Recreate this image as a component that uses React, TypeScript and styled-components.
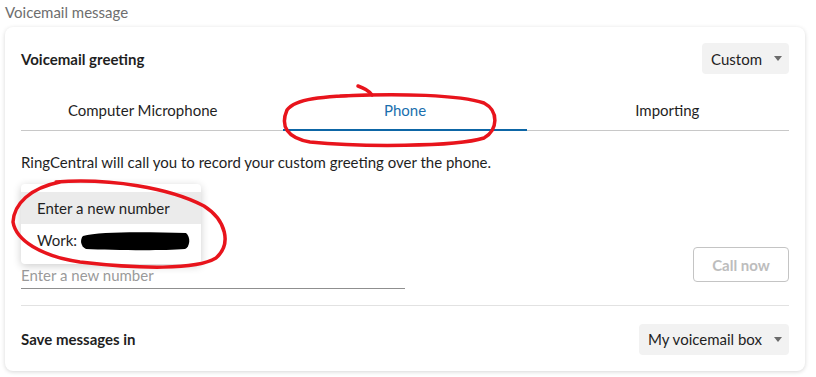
import React from "react";
import styled, { createGlobalStyle } from "styled-components";

const Global = createGlobalStyle`
  html, body { margin: 0; padding: 0; background: #ffffff; }
  body { font-family: Lato, "Open Sans", sans-serif; color: #212121; }
  * { box-sizing: border-box; }
`;

const Page = styled.div`
  position: relative;
  width: 816px;
  height: 377px;
  padding: 2px 11px 0 5px;
  overflow: hidden;
`;

const SectionLabel = styled.div`
  font-size: 15px;
  line-height: 20px;
  color: #6e6e6e;
  height: 25px;
`;

const Card = styled.div`
  background: #fff;
  border-radius: 8px;
  box-shadow: 0 1px 4px rgba(0, 0, 0, 0.16);
  padding: 16px 16px 16px 16px;
  display: flex;
  flex-direction: column;
`;

const HeaderRow = styled.div`
  display: flex;
  align-items: center;
  justify-content: space-between;
  height: 31px;
`;

const Title = styled.div`
  font-size: 15px;
  font-weight: 700;
  color: #1f1f1f;
`;

const Select = styled.div`
  display: flex;
  align-items: center;
  height: 31px;
  padding: 0 7px 0 9px;
  gap: 12px;
  background: #f2f2f2;
  border-radius: 4px;
  font-size: 15px;
  color: #1f1f1f;
`;

const Caret = styled.span`
  width: 0;
  height: 0;
  border-left: 4.5px solid transparent;
  border-right: 4.5px solid transparent;
  border-top: 5px solid #6b6b6b;
`;

const Tabs = styled.div`
  margin-top: 16px;
  display: grid;
  grid-template-columns: repeat(3, 1fr);
  column-gap: 19px;
  border-bottom: 1px solid #c8c8c8;
`;

const Tab = styled.div<{ $active?: boolean }>`
  height: 41px;
  display: flex;
  align-items: center;
  justify-content: center;
  font-size: 15px;
  color: ${(p) => (p.$active ? "#1a6fae" : "#1f1f1f")};
  box-shadow: ${(p) => (p.$active ? "inset 0 -2px 0 #0d66a6" : "none")};
  margin-bottom: -1px;
  padding-bottom: 1px;
`;

const Description = styled.p`
  margin: 21px 0 0;
  font-size: 15px;
  line-height: 20px;
  color: #1f1f1f;
`;

const PhoneRow = styled.div`
  margin-top: 12px;
  display: flex;
  justify-content: space-between;
  align-items: flex-end;
`;

const Field = styled.div`
  position: relative;
  width: 384px;
  height: 105px;
  display: flex;
  align-items: flex-end;
`;

const Input = styled.div`
  width: 100%;
  height: 30px;
  border-bottom: 1px solid #8f8f8f;
  font-size: 15px;
  line-height: 30px;
  color: #9a9a9a;
  padding-top: 1px;
`;

const Menu = styled.div`
  position: absolute;
  top: 0;
  left: 0;
  width: 180px;
  padding: 8px 0;
  background: #fff;
  border-radius: 4px;
  box-shadow: 0 2px 8px rgba(0, 0, 0, 0.2);
  z-index: 2;
`;

const MenuItem = styled.div<{ $highlight?: boolean }>`
  height: 32px;
  display: flex;
  align-items: center;
  padding-left: 16px;
  font-size: 15px;
  color: #1f1f1f;
  background: ${(p) => (p.$highlight ? "#ebebeb" : "transparent")};
`;

const Button = styled.button`
  width: 96px;
  height: 35px;
  margin-bottom: 7px;
  border: 1px solid #c4c4c4;
  border-radius: 4px;
  background: #fff;
  font-family: Lato, sans-serif;
  font-size: 15px;
  font-weight: 700;
  color: #bdbdbd;
`;

const Divider = styled.div`
  margin-top: 16px;
  height: 1px;
  background: #e2e2e2;
`;

const FooterRow = styled(HeaderRow)`
  margin-top: 17px;
  height: 32px;
`;

const Annotations = styled.svg`
  position: absolute;
  left: 0;
  top: 0;
  pointer-events: none;
  z-index: 5;
`;

export default function App() {
  return (
    <>
      <Global />
      <Page>
        <SectionLabel>Voicemail message</SectionLabel>
        <Card>
          <HeaderRow>
            <Title>Voicemail greeting</Title>
            <Select>
              Custom <Caret />
            </Select>
          </HeaderRow>
          <Tabs>
            <Tab>Computer Microphone</Tab>
            <Tab $active>Phone</Tab>
            <Tab>Importing</Tab>
          </Tabs>
          <Description>
            RingCentral will call you to record your custom greeting over the phone.
          </Description>
          <PhoneRow>
            <Field>
              <Menu>
                <MenuItem $highlight>Enter a new number</MenuItem>
                <MenuItem>Work:</MenuItem>
              </Menu>
              <Input>Enter a new number</Input>
            </Field>
            <Button>Call now</Button>
          </PhoneRow>
          <Divider />
          <FooterRow>
            <Title>Save messages in</Title>
            <Select>
              My voicemail box <Caret />
            </Select>
          </FooterRow>
        </Card>
        <Annotations width="816" height="377" viewBox="0 0 816 377">
          <path
            d="M83,236 C100,231 150,232 186,233 C191,237 190,247 185,249 C160,251 110,250 86,249 C80,246 80,239 83,236 Z"
            fill="#000"
          />
          <g fill="none" stroke="#e8141c" strokeWidth="3.5" strokeLinecap="round" strokeLinejoin="round">
            <path d="M358,86 C364,88 369,91 372,95" />
            <path d="M340,96 C400,93 460,95 484,103 C499,111 498,130 484,138 C455,147 360,147 310,142 C287,138 280,126 287,110 C295,99 320,96 372,95" />
            <path d="M56,182 C110,178 170,188 204,206 C226,220 232,244 216,258 C196,270 140,269 80,262 C40,256 16,240 13,222 C14,204 30,188 60,182" />
          </g>
        </Annotations>
      </Page>
    </>
  );
}
